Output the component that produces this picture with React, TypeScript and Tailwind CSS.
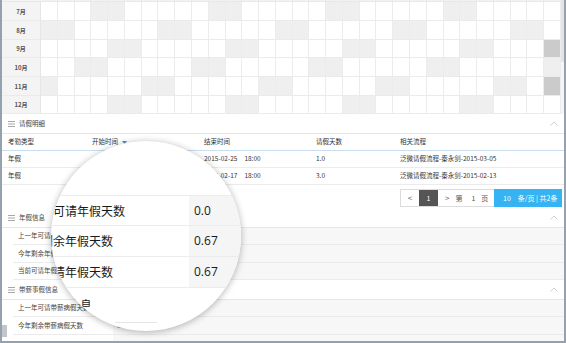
import React from "react";

type Row = { m: string; h: string; gray: number[]; dark: number[] };

const rows: Row[] = [
  { m: "7月", h: "h-[19px]", gray: [4, 5, 11, 12, 18, 19, 25, 26], dark: [] },
  { m: "8月", h: "h-[19px]", gray: [1, 2, 8, 9, 15, 16, 22, 23, 29, 30], dark: [] },
  { m: "9月", h: "h-[18px]", gray: [5, 6, 12, 13, 19, 20, 26, 27], dark: [31] },
  { m: "10月", h: "h-[19px]", gray: [3, 4, 10, 11, 17, 18, 24, 25, 31], dark: [] },
  { m: "11月", h: "h-[19px]", gray: [1, 7, 8, 14, 15, 21, 22, 28, 29], dark: [31] },
  { m: "12月", h: "h-[18px]", gray: [5, 6, 12, 13, 19, 20, 26, 27], dark: [] },
];

const days = Array.from({ length: 31 }, (_, i) => i + 1);

function MenuIcon() {
  return (
    <svg width="7" height="6" viewBox="0 0 7 6" className="shrink-0">
      <path d="M0 0.5H7M0 3H7M0 5.5H7" stroke="#a8a8a8" strokeWidth="1" />
    </svg>
  );
}

function ChevronUp() {
  return (
    <svg width="8" height="5" viewBox="0 0 8 5" className="shrink-0">
      <path d="M0.5 4.5L4 1L7.5 4.5" stroke="#cfcfcf" strokeWidth="1" fill="none" />
    </svg>
  );
}

function SectionHeader({ title }: { title: string }) {
  return (
    <div className="h-[20px] flex items-center border-b border-[#e6e6e6] pl-[6px] pr-[6px] bg-white">
      <MenuIcon />
      <span className="ml-[4px] text-[6.5px] text-[#444]">{title}</span>
      <div className="ml-auto">
        <ChevronUp />
      </div>
    </div>
  );
}

function InfoRow({ label, value, h }: { label: string; value: string; h: string }) {
  return (
    <div className={`flex ${h}`}>
      <div className="w-[11px] bg-white" />
      <div className="flex-1 flex border-b border-[#ebebeb]">
        <div className="w-[100px] pl-[5px] flex items-center bg-white text-[6.5px] text-[#444] whitespace-nowrap overflow-hidden">
          {label}
        </div>
        <div className="flex-1 bg-[#f7f7f7] pl-[4px] flex items-center text-[6.5px] text-[#555]">{value}</div>
      </div>
    </div>
  );
}

export default function App() {
  return (
    <div className="relative w-[566px] h-[343px] bg-white border-l-2 border-r-2 border-b-2 border-[#95a1ad] flex flex-col overflow-hidden font-['Noto_Sans_CJK_SC',sans-serif] text-[#333]">
      {/* calendar grid */}
      <div className="flex">
        <div className="w-[559px] flex flex-col">
          <div className="h-[2px] grid grid-cols-[39px_repeat(31,minmax(0,1fr))] border-b border-[#e8e8e8]">
            <div className="bg-[#f4f4f4]" />
            {days.map((d) => (
              <div key={d} className="bg-[#f2f2f2] border-r border-[#e8e8e8]" />
            ))}
          </div>
          {rows.map((r) => (
            <div
              key={r.m}
              className={`grid grid-cols-[39px_repeat(31,minmax(0,1fr))] border-b border-[#ebebeb] ${r.h}`}
            >
              <div className="bg-[#f4f4f4] border-r border-[#e6e6e6] flex items-center justify-center text-[6px] font-bold text-[#555]">
                {r.m}
              </div>
              {days.map((d) => (
                <div
                  key={d}
                  className={`border-r border-[#ececec] ${
                    r.dark.includes(d) ? "bg-[#cbcbcb]" : r.gray.includes(d) ? "bg-[#efefef]" : "bg-white"
                  }`}
                />
              ))}
            </div>
          ))}
        </div>
        <div className="w-[3px] flex flex-col bg-[#f6f6f6]">
          <div className="h-[62px] bg-[#e4e4e4]" />
        </div>
      </div>

      {/* leave details */}
      <SectionHeader title="请假明细" />
      <div className="grid grid-cols-[84px_112px_112px_84px_1fr] h-[17px] items-center border-b border-[#c9def0] pl-[6px] text-[6.5px] text-[#333]">
        <div>考勤类型</div>
        <div className="flex items-center">
          <span>开始时间</span>
          <svg width="5" height="3" viewBox="0 0 5 3" className="ml-[4px]">
            <path d="M0 0H5L2.5 3Z" fill="#3a8ee6" />
          </svg>
        </div>
        <div>结束时间</div>
        <div>请假天数</div>
        <div>相关流程</div>
      </div>
      {[
        ["2015-02-25", "1.0", "泛微请假流程-秦永剑-2015-03-05"],
        ["2015-02-17", "3.0", "泛微请假流程-秦永剑-2015-02-13"],
      ].map(([date, days2, flow]) => (
        <div
          key={date}
          className="grid grid-cols-[84px_112px_112px_84px_1fr] h-[17px] items-center border-b border-[#ececec] pl-[6px] text-[6.5px] text-[#333]"
        >
          <div>年假</div>
          <div />
          <div className="flex">
            <span>{date}</span>
            <span className="ml-[7px]">18:00</span>
          </div>
          <div>{days2}</div>
          <div className="whitespace-nowrap">{flow}</div>
        </div>
      ))}

      {/* pagination */}
      <div className="h-[23px] flex justify-end items-start pt-[4px] pr-[2px]">
        <div className="flex h-[18px] text-[7px]">
          <div className="flex h-full border border-[#dcdcdc] border-r-0 w-[94px] items-center text-[#555]">
            <span className="w-[18px] text-center text-[8px]">&lt;</span>
            <span className="w-[19px] h-full bg-[#555555] text-white flex items-center justify-center">1</span>
            <span className="ml-[7px] text-[8px]">&gt;</span>
            <span className="ml-[6px]">第</span>
            <span className="ml-[9px]">1</span>
            <span className="ml-[6px]">页</span>
          </div>
          <div className="w-[68px] h-full bg-[#35b3f2] text-white flex items-center pl-[9px] whitespace-nowrap">
            <span>10</span>
            <span className="ml-[7px]">条/页 | 共2条</span>
          </div>
        </div>
      </div>

      {/* annual leave info */}
      <SectionHeader title="年假信息" />
      <InfoRow label="上一年可请年假天数" value="0.0" h="h-[17px]" />
      <InfoRow label="今年剩余年假天数" value="0.67" h="h-[18px]" />
      <InfoRow label="当前可请年假天数" value="0.67" h="h-[17px]" />

      {/* paid leave info */}
      <SectionHeader title="带薪事假信息" />
      <InfoRow label="上一年可请带薪病假天数" value="0.0" h="h-[17px]" />
      <InfoRow label="今年剩余带薪病假天数" value="0.0" h="h-[18px]" />
      <div className="flex-1 flex">
        <div className="w-[11px] bg-white" />
        <div className="flex-1 flex">
          <div className="w-[100px] bg-white" />
          <div className="flex-1 bg-[#f7f7f7]" />
        </div>
      </div>

      {/* left scrollbar thumb */}
      <div className="absolute left-0 bottom-[4px] w-[5px] h-[12px] bg-[#c2c6ca]" />

      {/* magnifier */}
      <div className="absolute left-[49px] top-[141px] w-[190px] h-[190px] rounded-full overflow-hidden bg-white shadow-[0_1px_7px_rgba(0,0,0,0.3)]">
        <div className="flex flex-col pt-[54px] -ml-[34px] w-[300px]">
          {[
            ["上一年可请年假天数", "0.0"],
            ["今年剩余年假天数", "0.67"],
            ["当前可请年假天数", "0.67"],
          ].map(([l, v], i) => (
            <div
              key={l}
              className={`flex h-[31px] border-b border-[#ececec] ${i === 0 ? "border-t" : ""}`}
            >
              <div className="w-[172px] flex items-center text-[12px] text-[#1a1a1a] whitespace-nowrap">{l}</div>
              <div className="flex-1 bg-[#f5f5f5] flex items-center pl-[5px] text-[12px] text-[#1a1a1a] font-['Open_Sans',sans-serif]">
                {v}
              </div>
            </div>
          ))}
          <div className="mt-[11px] ml-[63px] h-[8px] overflow-hidden text-[12px] leading-[12px] text-[#222]">息</div>
          <div className="mt-[15px] ml-[98px] w-[42px] h-px bg-[#e5e5e5]" />
        </div>
      </div>
    </div>
  );
}
